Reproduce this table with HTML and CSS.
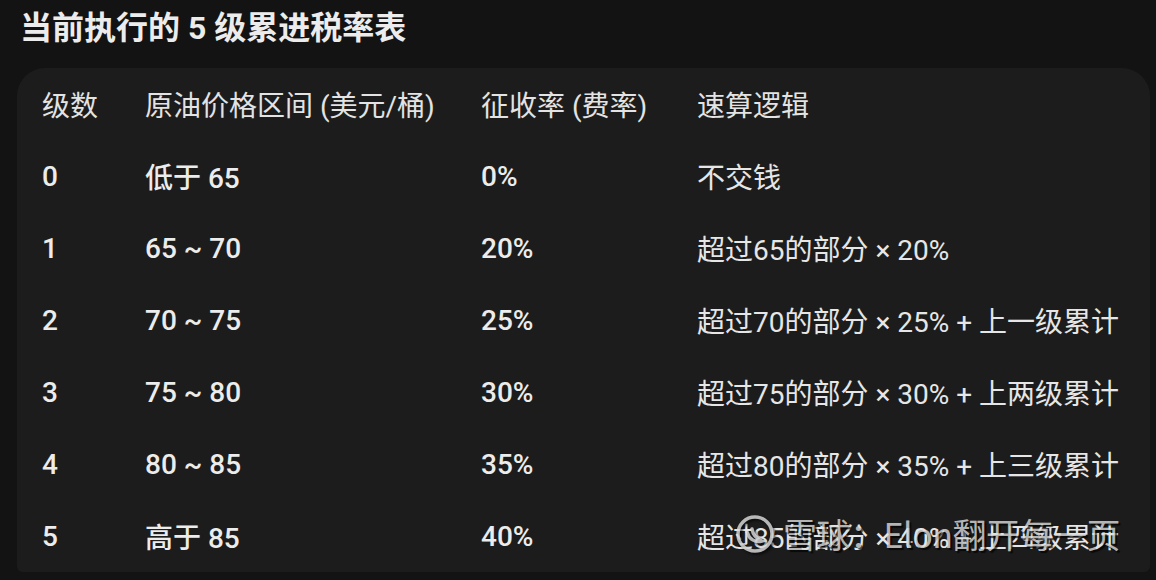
FILE: index.html
```html
<!DOCTYPE html>
<html lang="zh-CN">
<head>
<meta charset="utf-8">
<link rel="stylesheet" href="styles.css">
</head>
<body>
<div class="page">
  <h1 class="title">当前执行的 5 级累进税率表</h1>
  <div class="panel">
    <div class="grid">
      <div class="row head">
        <div class="cell">级数</div>
        <div class="cell">原油价格区间 (美元/桶)</div>
        <div class="cell">征收率 (费率)</div>
        <div class="cell">速算逻辑</div>
      </div>
      <div class="row">
        <div class="cell strong">0</div>
        <div class="cell strong">低于 65</div>
        <div class="cell strong">0%</div>
        <div class="cell">不交钱</div>
      </div>
      <div class="row">
        <div class="cell strong">1</div>
        <div class="cell strong">65 ~ 70</div>
        <div class="cell strong">20%</div>
        <div class="cell">超过65的部分 × 20%</div>
      </div>
      <div class="row">
        <div class="cell strong">2</div>
        <div class="cell strong">70 ~ 75</div>
        <div class="cell strong">25%</div>
        <div class="cell">超过70的部分 × 25% + 上一级累计</div>
      </div>
      <div class="row">
        <div class="cell strong">3</div>
        <div class="cell strong">75 ~ 80</div>
        <div class="cell strong">30%</div>
        <div class="cell">超过75的部分 × 30% + 上两级累计</div>
      </div>
      <div class="row">
        <div class="cell strong">4</div>
        <div class="cell strong">80 ~ 85</div>
        <div class="cell strong">35%</div>
        <div class="cell">超过80的部分 × 35% + 上三级累计</div>
      </div>
      <div class="row">
        <div class="cell strong">5</div>
        <div class="cell strong">高于 85</div>
        <div class="cell strong">40%</div>
        <div class="cell">超过85的部分 × 40% + 上四级累计</div>
      </div>
    </div>
    <div class="watermark">
      <svg class="wm-logo" viewBox="0 0 44 44" width="44" height="44">
        <circle cx="22" cy="22" r="17" fill="none" stroke="currentColor" stroke-width="3.5"/>
        <path d="M14 20 C16 27 22 31 29 29 C24 27 20 23 19 17" fill="none" stroke="currentColor" stroke-width="3.5" stroke-linecap="round"/>
      </svg>
      <span class="wm-text">雪球：Elon翻开每一页</span>
    </div>
  </div>
</div>
</body>
</html>
```

FILE: styles.css
```css
html, body {
  margin: 0;
  padding: 0;
  background: #131313;
}
body {
  font-family: Roboto, "Noto Sans CJK SC", sans-serif;
  color: #e6e6e6;
  width: 1156px;
  height: 580px;
  overflow: hidden;
}
.page {
  padding: 8px 6px 0 17px;
}
.title {
  margin: 0 0 20px 3px;
  font-size: 32px;
  line-height: 40px;
  font-weight: 700;
  color: #ececec;
}
.panel {
  position: relative;
  background: #1c1c1c;
  border-radius: 28px 28px 6px 6px;
  height: 504px;
  padding-left: 25px;
  overflow: hidden;
}
.grid {
  display: flex;
  flex-direction: column;
}
.row {
  display: grid;
  grid-template-columns: 103px 336px 216px 1fr;
  height: 72px;
  align-items: center;
  font-size: 28px;
}
.cell {
  white-space: nowrap;
}
.head .cell {
  font-weight: 400;
  color: #e3e3e3;
}
.strong {
  font-weight: 500;
  color: #ececec;
}
.watermark {
  position: absolute;
  left: 716px;
  top: 444px;
  display: flex;
  align-items: center;
  gap: 6px;
  color: rgba(225, 225, 225, 0.8);
  pointer-events: none;
}
.wm-logo {
  filter: drop-shadow(2px 2px 1px rgba(0, 0, 0, 0.7));
}
.wm-text {
  font-family: "Noto Sans CJK SC", sans-serif;
  font-size: 34px;
  line-height: 44px;
  text-shadow: 2px 2px 1px rgba(0, 0, 0, 0.7);
  letter-spacing: -0.5px;
}
```
